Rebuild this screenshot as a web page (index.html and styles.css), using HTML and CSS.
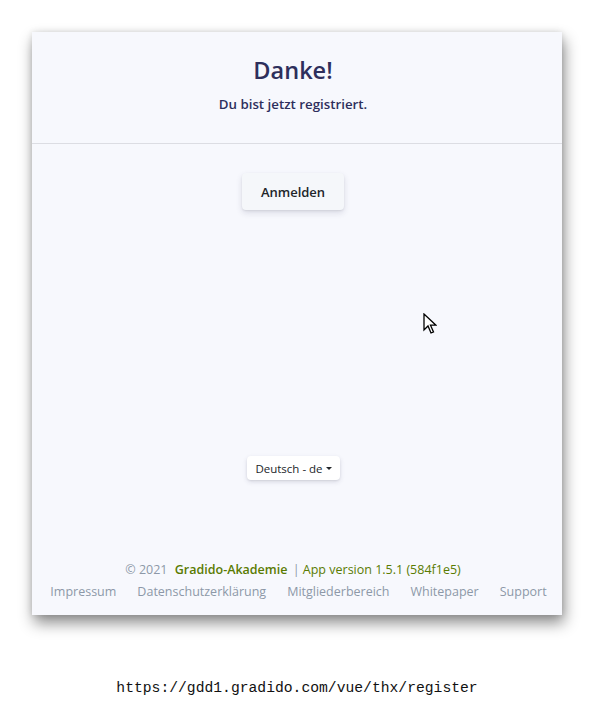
FILE: index.html
```html
<!DOCTYPE html>
<html lang="de">
<head>
<meta charset="utf-8">
<title>Gradido</title>
<link rel="stylesheet" href="styles.css">
</head>
<body>
<div class="stage">
  <div class="card">
    <header class="card-header">
      <h1 class="title">Danke!</h1>
      <p class="subtitle">Du bist jetzt registriert.</p>
    </header>
    <main class="card-body">
      <button class="btn-login">Anmelden</button>
      <div class="spacer"></div>
      <button class="btn-lang">Deutsch - de <span class="caret"></span></button>
    </main>
    <footer class="card-footer">
      <div class="copy">
        <span class="muted">© 2021</span>
        <a class="brand">Gradido-Akademie</a>
        <span class="muted">|</span>
        <a class="version">App version 1.5.1 (584f1e5)</a>
      </div>
      <nav class="links">
        <a>Impressum</a>
        <a>Datenschutzerklärung</a>
        <a>Mitgliederbereich</a>
        <a>Whitepaper</a>
        <a>Support</a>
      </nav>
    </footer>
    <svg class="cursor" width="14" height="22" viewBox="0 0 14 22">
      <path d="M1 1 L1 17 L5 13 L8 20 L10.5 19 L7.5 12.2 L13 12.2 Z" fill="#fff" stroke="#000" stroke-width="1.3" stroke-linejoin="miter"/>
    </svg>
  </div>
  <div class="url">https://gdd1.gradido.com/vue/thx/register</div>
</div>
</body>
</html>
```
FILE: styles.css
```css
* { box-sizing: border-box; }
html, body { margin: 0; padding: 0; background: #fff; }
body { font-family: "Open Sans", "Noto Sans", sans-serif; }

.stage {
  padding: 32px 0 0 32px;
  width: 594px;
}

.card {
  position: relative;
  width: 530px;
  height: 583px;
  background: #f7f8fd;
  box-shadow: 2px 8px 14px rgba(0, 0, 0, 0.45), 0 0 6px rgba(0, 0, 0, 0.12);
  display: flex;
  flex-direction: column;
}

.card-header {
  height: 112px;
  border-bottom: 1px solid #dcdde3;
  text-align: center;
  padding: 22px 8px 0 0;
}

.title {
  margin: 0;
  font-size: 23.5px;
  font-weight: 550;
  color: #2e2f5c;
  line-height: 32px;
}

.subtitle {
  margin: 9px 0 0;
  font-size: 13.3px;
  font-weight: 550;
  color: #2e2f5c;
  line-height: 18px;
}

.card-body {
  flex: 1;
  display: flex;
  flex-direction: column;
  align-items: center;
  padding: 29px 8px 0 0;
}

.btn-login {
  font-family: inherit;
  width: 102px;
  height: 37px;
  border: 0;
  border-radius: 4px;
  background: #f5f7fa;
  color: #212529;
  font-size: 13px;
  font-weight: 550;
  box-shadow: 0 3px 6px rgba(50, 50, 93, 0.14), 0 1px 2px rgba(0, 0, 0, 0.08);
}

.spacer { height: 246px; }

.btn-lang {
  font-family: inherit;
  height: 24px;
  width: 93px;
  margin-left: 1px;
  padding: 0;
  border: 0;
  border-radius: 4px;
  background: #fff;
  color: #212529;
  font-size: 11.5px;
  font-weight: 500;
  box-shadow: 0 2px 5px rgba(50, 50, 93, 0.14), 0 1px 2px rgba(0, 0, 0, 0.08);
  display: inline-flex;
  align-items: center;
  justify-content: center;
  gap: 3px;
}

.caret {
  width: 0;
  height: 0;
  border-left: 3px solid transparent;
  border-right: 3px solid transparent;
  border-top: 3px solid #212529;
  margin-top: 1px;
}

.card-footer {
  text-align: center;
  padding-bottom: 12px;
  font-size: 12.5px;
  line-height: 22px;
}

.copy { padding-right: 8px; }
.muted { color: #8d98a8; }
.brand { color: #5a7b02; font-weight: 600; margin: 0 2px 0 4px; }
.version { color: #5a7b02; }

.links {
  display: flex;
  justify-content: center;
  gap: 21px;
  margin-left: 3px;
}
.links a { color: #8d98a8; }

.cursor {
  position: absolute;
  left: 391px;
  top: 281px;
}

.url {
  width: 530px;
  text-align: center;
  margin-top: 65px;
  font-family: "Liberation Mono", "DejaVu Sans Mono", monospace;
  font-size: 14.7px;
  color: #111;
}
```
